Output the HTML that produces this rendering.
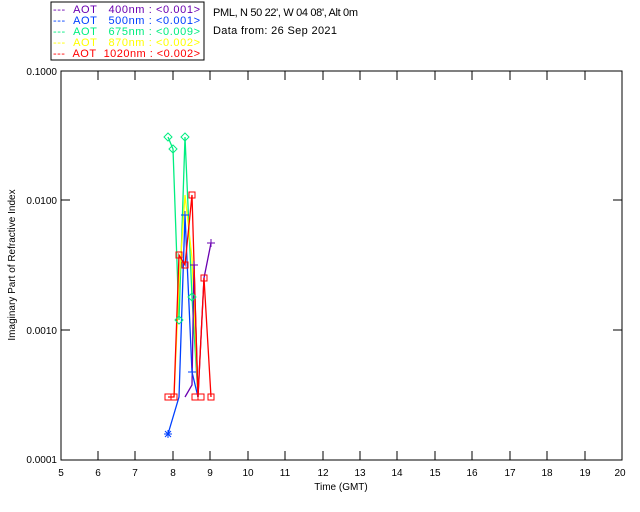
<!DOCTYPE html>
<html><head><style>
body{margin:0;background:#fff;width:640px;height:512px;overflow:hidden}
svg{display:block;font-family:"Liberation Sans",sans-serif}
</style></head><body>
<svg width="640" height="512" xmlns="http://www.w3.org/2000/svg">
<rect x="51" y="2" width="153" height="58" fill="#fff" stroke="#000" stroke-width="1"/>
<g font-size="11">
<text x="53" y="13" fill="#6a00b0" textLength="147" lengthAdjust="spacing">---&#160;&#160;AOT&#160;&#160;&#160;400nm&#160;:&#160;&lt;0.001&gt;</text>
<text x="53" y="24" fill="#0040ff" textLength="147" lengthAdjust="spacing">---&#160;&#160;AOT&#160;&#160;&#160;500nm&#160;:&#160;&lt;0.001&gt;</text>
<text x="53" y="35" fill="#00ee80" textLength="147" lengthAdjust="spacing">---&#160;&#160;AOT&#160;&#160;&#160;675nm&#160;:&#160;&lt;0.009&gt;</text>
<text x="53" y="46" fill="#ffff00" textLength="147" lengthAdjust="spacing">---&#160;&#160;AOT&#160;&#160;&#160;870nm&#160;:&#160;&lt;0.002&gt;</text>
<text x="53" y="57" fill="#ff0000" textLength="147" lengthAdjust="spacing">---&#160;&#160;AOT&#160;&#160;1020nm&#160;:&#160;&lt;0.002&gt;</text>
<text x="213" y="16" fill="#000" textLength="145">PML, N 50 22', W 04 08', Alt 0m</text>
<text x="213" y="34" fill="#000" textLength="124">Data from: 26 Sep 2021</text>
</g>
<rect x="61" y="71" width="561" height="389" fill="none" stroke="#000"/>
<g stroke="#000">
<path d="M98 460v-9M135 460v-9M173 460v-9M210 460v-9M248 460v-9M285 460v-9M323 460v-9M360 460v-9M397 460v-9M435 460v-9M472 460v-9M510 460v-9M547 460v-9M585 460v-9"/>
<path d="M98 71v9M135 71v9M173 71v9M210 71v9M248 71v9M285 71v9M323 71v9M360 71v9M397 71v9M435 71v9M472 71v9M510 71v9M547 71v9M585 71v9"/>
<path d="M61 200h9M61 330h9M622 200h-9M622 330h-9"/>
</g>
<g font-size="10" fill="#000">
<text x="57" y="75" text-anchor="end">0.1000</text>
<text x="57" y="204" text-anchor="end">0.0100</text>
<text x="57" y="334" text-anchor="end">0.0010</text>
<text x="57" y="463" text-anchor="end">0.0001</text>
<g text-anchor="middle">
<text x="61" y="476">5</text><text x="98" y="476">6</text><text x="135" y="476">7</text><text x="173" y="476">8</text><text x="210" y="476">9</text><text x="248" y="476">10</text><text x="285" y="476">11</text><text x="323" y="476">12</text><text x="360" y="476">13</text><text x="397" y="476">14</text><text x="435" y="476">15</text><text x="472" y="476">16</text><text x="510" y="476">17</text><text x="547" y="476">18</text><text x="585" y="476">19</text><text x="620" y="476">20</text>
<text x="341" y="490">Time (GMT)</text>
<text transform="translate(15,265) rotate(-90)">Imaginary Part of Refractive Index</text>
</g></g>
<g fill="none" stroke-width="1.3">
<polyline stroke="#00ee80" points="168,137 173,149 179,320 185,137 192,297 198,397"/>
<polyline stroke="#ffff00" points="174,397 179,283 185,195 192,258 198,397"/>
<polyline stroke="#0040ff" points="168,434 179,397 185,215 192,372 198,397"/>
<polyline stroke="#6a00b0" points="185,397 192,385 194,265 198,397 204,278 211,243"/>
<polyline stroke="#ff0000" points="168,397 174,397 179,255 185,265 192,195 198,397 204,278 211,397"/>
</g>
<g fill="none" stroke="#ff0000">
<rect x="165" y="394" width="6" height="6"/><rect x="171" y="394" width="6" height="6"/><rect x="176" y="252" width="6" height="6"/><rect x="182" y="262" width="6" height="6"/><rect x="189" y="192" width="6" height="6"/><rect x="192" y="394" width="6" height="6"/><rect x="198" y="394" width="6" height="6"/><rect x="201" y="275" width="6" height="6"/><rect x="208" y="394" width="6" height="6"/>
</g>
<g fill="none" stroke="#00ee80">
<path d="M168 133l4 4-4 4-4-4zM173 145l4 4-4 4-4-4zM185 133l4 4-4 4-4-4zM179 316l4 4-4 4-4-4zM192 293l4 4-4 4-4-4z"/>
</g>
<g stroke="#0040ff"><path d="M164 434h8M168 430v8M165 431l6 6M171 431l-6 6M181 215h8M185 211v8M188 372h8M192 368v8"/></g>
<g stroke="#6a00b0"><path d="M207 243h8M211 239v8M190 265h8M194 261v8"/></g>
</svg>
</body></html>
